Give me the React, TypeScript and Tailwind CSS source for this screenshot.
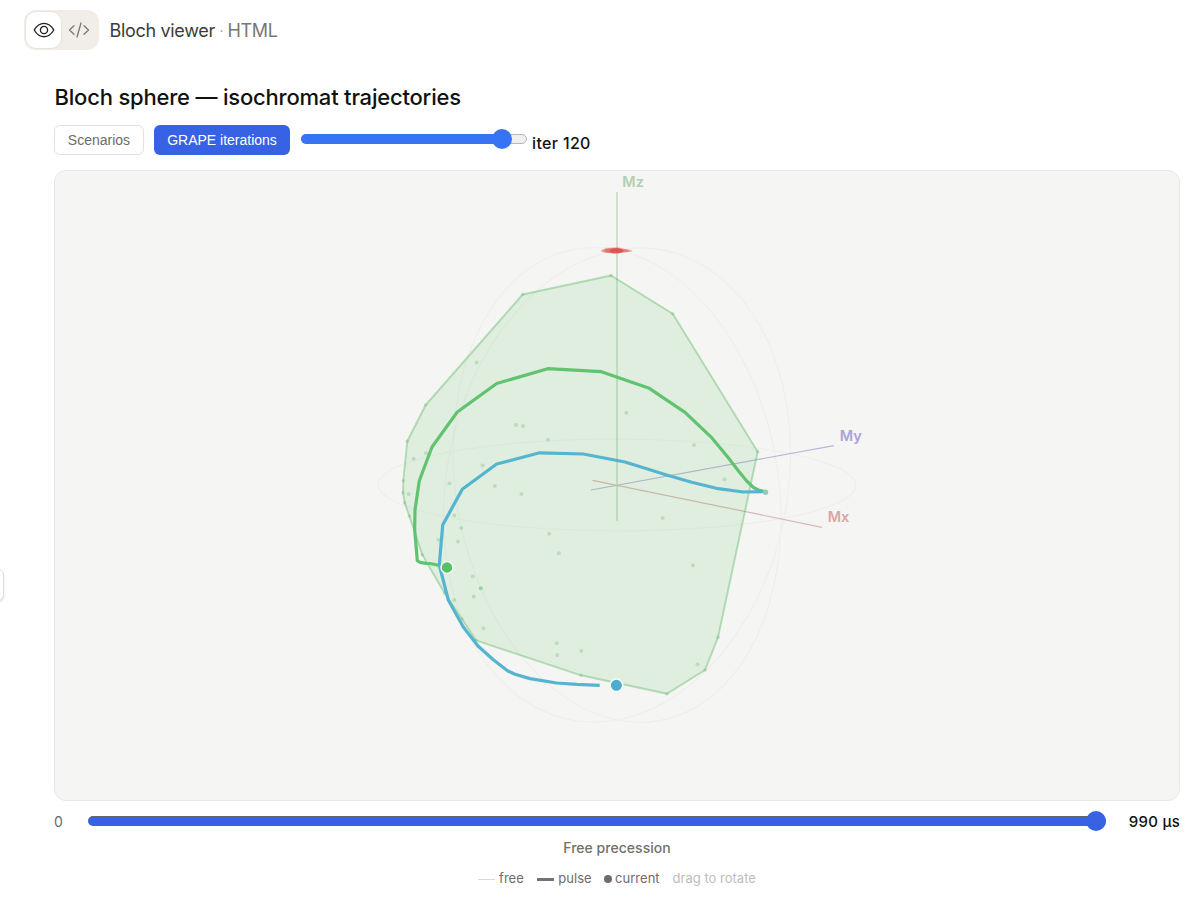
import React from "react";

type Point = [number, number];

const hull: Point[] = [
  [522.7, 294.5], [611, 275.5], [672.7, 313.7], [757.7, 451.7], [718, 637.3], [705, 670],
  [667, 693.7], [581, 675.3], [476, 640.3], [462, 619], [444.5, 593], [422.3, 554.7],
  [409.3, 516], [404.7, 502.7], [403, 492.7], [403.3, 480.7], [407.3, 441.3], [425.7, 405],
];

const samples: Point[] = [
  [476.5, 362.5], [515.9, 425], [523, 426], [548, 439.7], [413.7, 458.7], [426, 453.3],
  [482.6, 465.5], [449.4, 483.4], [494.8, 486], [521.4, 494], [408.7, 494], [454.3, 515.6],
  [461.3, 528], [458, 541.5], [438.5, 539.8], [549.2, 533.7], [558.8, 553.3], [472.8, 576.6],
  [473.7, 596.4], [454.3, 600], [483.4, 628.3], [556.8, 643.3],
  [557.3, 655], [581.3, 651], [626.3, 412.7], [694, 445], [724.5, 479.3], [662.7, 518],
  [693, 565.2], [697.5, 664.3],
];

const greenPath: Point[] = [
  [765, 491.7], [758.3, 490], [753.3, 487.3], [746.7, 481], [738.3, 470.7], [728.3, 457.7],
  [711.7, 437.7], [685, 412.3], [649.3, 388.3], [601.3, 371.7], [547.7, 368.7], [496.7, 383.5],
  [457.3, 412], [432, 447], [419.3, 480.7], [415, 510], [414.7, 530], [417.3, 560.7],
  [420, 562.3], [426, 563.3], [430, 563.5], [438.3, 565.3],
];

const bluePath: Point[] = [
  [765, 491.7], [743.3, 492], [718.3, 488.7], [691.7, 482.2], [666.7, 475], [625, 462],
  [583.3, 454], [539.7, 452.8], [496.7, 464], [462.3, 489.3], [442.7, 525], [439.3, 565],
  [448.3, 600], [463.3, 627], [478, 646], [493, 659.5], [507.5, 670.7], [515, 674.3],
  [530, 678.6], [556.7, 683], [577, 684.4], [599.7, 685.4],
];

const redSpots = [
  { x: 616.5, rx: 7, ry: 2.8, o: 0.75 },
  { x: 613, rx: 9, ry: 2.7, o: 0.5 },
  { x: 620, rx: 9, ry: 2.1, o: 0.4 },
  { x: 608, rx: 7, ry: 2.2, o: 0.35 },
  { x: 626, rx: 6.5, ry: 1.4, o: 0.35 },
];

const toPoints = (list: Point[]) => list.map((p) => p.join(",")).join(" ");

function BlochSphere() {
  return (
    <svg viewBox="55 171 1124 629" className="block h-full w-full">
      <g fill="none" stroke="#eeeeed" strokeWidth="1.1">
        <circle r="1" transform="matrix(164 33.6 173.6 -31.2 617 485)" vectorEffect="non-scaling-stroke" />
        <circle r="1" transform="matrix(164 33.6 0 -235 617 485)" vectorEffect="non-scaling-stroke" />
        <circle r="1" transform="matrix(173.6 -31.2 0 -235 617 485)" vectorEffect="non-scaling-stroke" />
      </g>
      <g strokeWidth="1.2" opacity="0.65">
        <line x1="592.5" y1="480.3" x2="822" y2="527.3" stroke="#cf9494" />
        <line x1="591" y1="490" x2="834" y2="445.6" stroke="#9a93ca" />
        <line x1="617" y1="192" x2="617" y2="521" stroke="#9cc29c" strokeWidth="1.3" />
      </g>
      <g className="font-['Inter','Liberation_Sans',sans-serif] text-[14.5px] font-semibold">
        <text x="622.3" y="186.7" fill="#b1cfb1">Mz</text>
        <text x="839.7" y="440.5" fill="#aaa3d8">My</text>
        <text x="827.7" y="522.3" fill="#d8a7a5">Mx</text>
      </g>
      {redSpots.map((s) => (
        <ellipse key={s.x} cx={s.x} cy="250.7" rx={s.rx} ry={s.ry} fill="#e14b48" opacity={s.o} />
      ))}
      <path d="M600.5 251.8 606 247.7l12-1 9 3 5.5 1.8-9 .8-10 1.2z" fill="#e14b48" opacity=".25" />
      <polygon
        points={toPoints(hull)}
        fill="#50be5a"
        fillOpacity="0.125"
        stroke="#50b45a"
        strokeOpacity="0.38"
        strokeWidth="1.9"
        strokeLinejoin="round"
      />
      <g fill="#50a45a" opacity="0.24">
        {samples.map(([x, y], i) => (
          <circle key={i} cx={x} cy={y} r="2" />
        ))}
        {hull.map(([x, y], i) => (
          <circle key={`h${i}`} cx={x} cy={y} r="1.8" />
        ))}
      </g>
      <circle cx="480.8" cy="588.3" r="2" fill="#50b45a" opacity="0.45" />
      <polyline points={toPoints(greenPath)} fill="none" stroke="#61c370" strokeWidth="3.2" strokeLinejoin="round" />
      <polyline points={toPoints(bluePath)} fill="none" stroke="#55b4d0" strokeWidth="3.2" strokeLinejoin="round" />
      <circle cx="765.5" cy="492.2" r="2.7" fill="#92cbb2" />
      <circle cx="447" cy="567.4" r="6" fill="#58bf66" stroke="#f7faf7" strokeWidth="1.5" />
      <circle cx="616.4" cy="685.3" r="6.3" fill="#4caeca" stroke="#f8fbfb" strokeWidth="1.5" />
    </svg>
  );
}

function ViewToggle() {
  return (
    <div className="flex h-10 w-[75px] rounded-xl bg-[#f0eee7] p-px">
      <button className="flex h-[38px] w-[37px] items-center justify-center rounded-[11px] border border-[#e6e4dc] bg-white" aria-label="Preview">
        <svg width="22" height="18" viewBox="0 0 22 18" fill="none" stroke="#202020" strokeWidth="1.35">
          <path d="M1.2 9C3.6 4.9 7 2.3 11 2.3S18.4 4.9 20.8 9C18.4 13.1 15 15.7 11 15.7S3.6 13.1 1.2 9Z" strokeLinejoin="round" />
          <circle cx="11" cy="9" r="3.6" />
        </svg>
      </button>
      <button className="flex h-[38px] w-[34px] items-center justify-center" aria-label="Code">
        <svg width="22" height="18" viewBox="0 0 22 18" fill="none" stroke="#777773" strokeWidth="1.3" strokeLinecap="round" strokeLinejoin="round">
          <path d="M6 4.8 1.5 9 6 13.2M16 4.8 20.5 9 16 13.2M13 2 9 16" />
        </svg>
      </button>
    </div>
  );
}

export default function App() {
  return (
    <div className="relative h-[919px] w-[1200px] overflow-hidden bg-white font-['Inter','Liberation_Sans',sans-serif] text-[#111]">
      <div className="absolute -left-4 top-[569px] h-[32px] w-5 rounded-md border border-[#dededc] bg-white shadow-sm" />
      <header className="flex h-[60px] items-center pl-[24px]">
        <ViewToggle />
        <div className="ml-[10.5px] flex h-[60px] items-center whitespace-pre text-[18px] text-[#3c3c3a]">
          <span className="w-[110px] tracking-[-0.32px]">Bloch viewer</span>
          <span className="w-[8px] text-[14px] text-[#999]">·</span>
          <span className="tracking-[-0.35px] text-[#777774]">HTML</span>
        </div>
      </header>
      <main className="pl-[54px] pr-5">
        <h1 className="flex h-[65px] items-end pb-[14px] pl-[0.5px] text-[22px] leading-[27px] font-medium tracking-[-0.2px]">
          Bloch sphere — isochromat trajectories
        </h1>
        <div className="flex h-[30px] font-['Liberation_Sans',sans-serif] text-[14px]">
          <button className="h-[30px] w-[90px] rounded-md border border-[#e1e1df] bg-white text-[#6d6d69]">Scenarios</button>
          <button className="ml-[10px] h-[30px] w-[136px] rounded-md bg-[#3662e3] text-white">GRAPE iterations</button>
          <div className="ml-[11px] mt-[4px] flex h-5 w-[226px] items-center">
            <div className="relative flex h-[10px] w-full items-center rounded-full border border-[#b7b7b7] bg-[#efefef]">
              <div className="-ml-px h-[10px] w-[203px] rounded-l-full bg-[#3674f3]" />
              <div className="absolute left-[190px] h-[19.5px] w-[19.5px] rounded-full bg-[#3674f3]" />
            </div>
          </div>
          <span className="ml-[5px] mt-[7px] font-['Inter','Liberation_Sans',sans-serif] text-[16px] leading-[22px] font-medium tracking-[0.35px]">iter 120</span>
        </div>
        <section className="mt-[15px] h-[631px] w-[1126px] overflow-hidden rounded-xl border border-[#e7e7e5] bg-[#f5f5f3]">
          <BlochSphere />
        </section>
        <div className="flex h-[40px] w-[1126px] items-center">
          <span className="w-[34px] text-[14px] text-[#696965]">0</span>
          <div className="relative h-[10px] w-[1018px] rounded-full border-t border-[#64666b] bg-[#3662e3]">
            <div className="absolute -top-[6px] right-0 h-5 w-5 rounded-full bg-[#3662e3]" />
          </div>
          <span className="flex-1 pt-[2px] text-right text-[15px] font-medium tracking-[0.25px]">990 µs</span>
        </div>
        <p className="h-[14px] text-center text-[14px] leading-[13px] font-medium tracking-[0.03px] text-[#70706c]">Free precession</p>
        <div className="mt-[15px] flex h-[18px] items-center justify-center text-[13px] tracking-[0.01px] text-[#6f6b69]">
          <span className="mr-1 h-px w-[17px] bg-[#d8d8d6]" />
          <span>free</span>
          <span className="mr-1 ml-[13px] h-[3px] w-[17.5px] bg-[#777272]" />
          <span>pulse</span>
          <span className="mr-[3.5px] ml-[12px] h-2 w-2 rounded-full bg-[#6e6c6b]" />
          <span>current</span>
          <span className="ml-[13px] text-[#bdbdbb]">drag to rotate</span>
        </div>
      </main>
    </div>
  );
}
